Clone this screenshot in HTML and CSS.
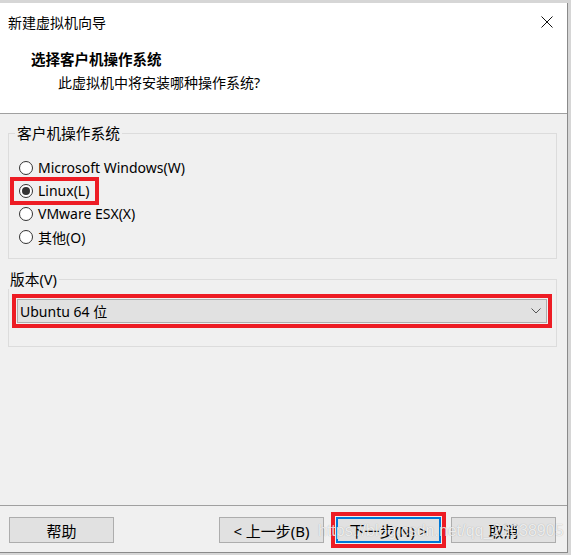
FILE: index.html
```html
<!DOCTYPE html>
<html lang="zh-CN">
<head>
    <meta charset="UTF-8">
    <title>新建虚拟机向导</title>
    <link rel="stylesheet" href="styles.css">
</head>
<body>
    <div class="window">
        <div class="header">
            <div class="titlebar">
                <span>新建虚拟机向导</span>
                <svg class="close" width="12" height="12" viewBox="0 0 12 12">
                    <path d="M0.5 0.5 L11.5 11.5 M11.5 0.5 L0.5 11.5" stroke="#111" stroke-width="1" fill="none"/>
                </svg>
            </div>
            <div class="intro">
                <h1>选择客户机操作系统</h1>
                <p>此虚拟机中将安装哪种操作系统?</p>
            </div>
        </div>

        <div class="content">
            <fieldset class="group os-group">
                <legend>客户机操作系统</legend>
                <div class="option"><span class="radio"></span>Microsoft Windows(W)</div>
                <div class="option marked"><span class="radio checked"></span>Linux(L)</div>
                <div class="option"><span class="radio"></span>VMware ESX(X)</div>
                <div class="option"><span class="radio"></span>其他(O)</div>
            </fieldset>

            <fieldset class="group version-group">
                <legend>版本(V)</legend>
                <div class="mark">
                    <div class="combo">
                        <span>Ubuntu 64 位</span>
                        <svg width="10" height="6" viewBox="0 0 10 6">
                            <polyline points="0.5,0.5 5,5 9.5,0.5" stroke="#555" stroke-width="1" fill="none"/>
                        </svg>
                    </div>
                </div>
            </fieldset>
        </div>

        <div class="footer">
            <button class="btn">帮助</button>
            <div class="spacer"></div>
            <button class="btn">&lt; 上一步(B)</button>
            <div class="mark next-mark">
                <button class="btn default">下一步(N) &gt;</button>
            </div>
            <button class="btn">取消</button>
            <div class="watermark">https://blog.csdn.net/qq_21038905</div>
        </div>
    </div>
</body>
</html>
```

FILE: styles.css
```css
body {
    margin: 0;
    padding-top: 3px;
    background-color: #d6d6d6;
    font-family: "Noto Sans", "Noto Sans CJK SC", sans-serif;
    font-size: 14px;
    color: #000;
}
.window {
    width: 567px;
    background-color: #f0f0f0;
    border-right: 1px solid #8a8a8a;
    border-bottom: 1px solid #8a8a8a;
}
.header {
    height: 110px;
    background-color: #fff;
    border-bottom: 1px solid #a0a0a0;
}
.titlebar {
    height: 38px;
    display: flex;
    align-items: center;
    justify-content: space-between;
    padding: 0 14px 0 8px;
}
.intro {
    padding-top: 8px;
}
.intro h1 {
    margin: 0 0 4px 31px;
    font-size: 14.5px;
    font-weight: bold;
    line-height: 20px;
}
.intro p {
    margin: 0 0 0 58px;
    line-height: 20px;
}
.content {
    height: 391px;
    box-sizing: border-box;
    padding: 9px 10px 0 8px;
}
.group {
    margin: 0;
    border: 1px solid #dcdcdc;
    min-width: 0;
}
.group legend {
    padding: 0 2px;
    margin-left: -4px;
    line-height: 20px;
    font-size: 14.7px;
}
.os-group {
    padding: 13px 10px 10px 10px;
}
.option {
    position: relative;
    display: flex;
    align-items: center;
    height: 23px;
    width: fit-content;
}
.option.marked::after {
    content: '';
    position: absolute;
    left: -9px;
    top: -2px;
    width: 89px;
    height: 28px;
    box-sizing: border-box;
    border: 4px solid #ed1c24;
}
.radio {
    width: 14px;
    height: 14px;
    box-sizing: border-box;
    border: 1px solid #333;
    border-radius: 50%;
    background-color: #fff;
    margin-right: 5px;
    display: flex;
    align-items: center;
    justify-content: center;
}
.radio.checked::before {
    content: '';
    width: 8px;
    height: 8px;
    border-radius: 50%;
    background-color: #333;
}
.version-group {
    margin-top: 10px;
    padding: 5px 4px 18px 3px;
}
.mark {
    border: 4px solid #ed1c24;
    padding: 1px;
}
.combo {
    height: 24px;
    box-sizing: border-box;
    border: 1px solid #adadad;
    background-color: #e1e1e1;
    display: flex;
    align-items: center;
    justify-content: space-between;
    padding: 0 5px 0 2px;
}
.footer {
    position: relative;
    height: 47px;
    box-sizing: border-box;
    border-top: 1px solid #a0a0a0;
    padding: 2px 11px 0 9px;
    display: flex;
    align-items: center;
}
.spacer {
    flex: 1;
}
.btn {
    width: 105px;
    height: 26px;
    border: 1px solid #adadad;
    background-color: #e1e1e1;
    font-family: inherit;
    font-size: 15px;
    padding: 0;
    color: #000;
}
.btn.default {
    border: 2px solid #0078d7;
    display: block;
}
.next-mark {
    margin: 0 5px 0 7px;
}
.watermark {
    position: absolute;
    left: 318px;
    top: 16px;
    font-family: "Liberation Sans", Arial, sans-serif;
    font-size: 16px;
    color: rgba(255, 255, 255, 0.8);
    text-shadow: 0 0 1px rgba(0, 0, 0, 0.3);
    pointer-events: none;
}
```
